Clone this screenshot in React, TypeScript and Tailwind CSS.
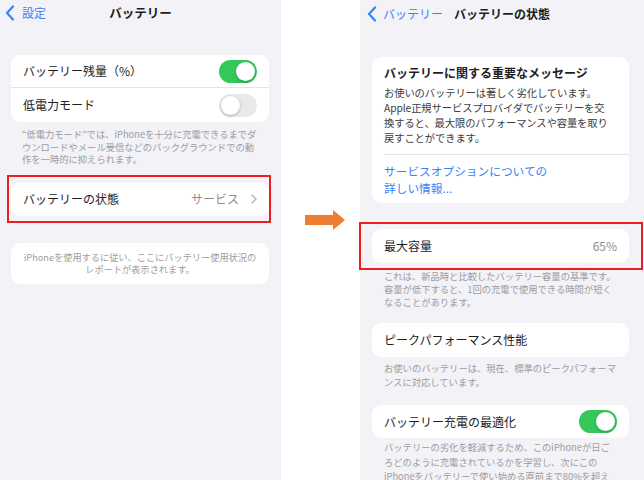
import React from "react";

const font = "font-['Noto_Sans_CJK_JP','Noto_Sans',sans-serif]";

function Toggle({ on }: { on: boolean }) {
  return (
    <div
      className={
        on
          ? "relative w-[38px] h-[23px] rounded-full bg-[#34c759]"
          : "relative w-[38px] h-[23px] rounded-full bg-[#e9e9eb]"
      }
    >
      <div
        className={
          on
            ? "absolute top-[2px] right-[2px] w-[19px] h-[19px] rounded-full bg-white shadow-[0_1px_3px_rgba(0,0,0,0.25)]"
            : "absolute top-[2px] left-[2px] w-[19px] h-[19px] rounded-full bg-white shadow-[0_1px_3px_rgba(0,0,0,0.25)]"
        }
      />
    </div>
  );
}

function BackChevron() {
  return (
    <svg width="10" height="16" viewBox="0 0 10 16" fill="none">
      <path d="M8 1.5L2 8l6 6.5" stroke="#3a82f7" strokeWidth="2.2" strokeLinecap="round" strokeLinejoin="round" />
    </svg>
  );
}

function Footnote({ lines, className = "" }: { lines: string[]; className?: string }) {
  return (
    <div className={"text-[9.3px] text-[#9c9ca1] " + className}>
      {lines.map((l) => (
        <div key={l} className="whitespace-nowrap">
          {l}
        </div>
      ))}
    </div>
  );
}

function LeftPhone() {
  return (
    <div className="w-[281px] shrink-0 bg-[#f2f2f7] text-[#1d1d1f]">
      {/* nav */}
      <div className="relative h-[25px] flex items-center">
        <div className="flex items-center gap-[7px] pl-[5px]">
          <BackChevron />
          <span className="text-[12px] text-[#3a82f7]">設定</span>
        </div>
        <div className="absolute left-0 right-0 text-center text-[12.5px] font-bold leading-[25px]">バッテリー</div>
      </div>

      <div className="mt-[30px] ml-[11px] w-[258px] bg-white rounded-[9px]">
        <div className="h-[33px] flex items-center justify-between pl-[12px] pr-[12px] border-b border-[#e3e3e6]">
          <span className="text-[12px]">バッテリー残量（%）</span>
          <Toggle on />
        </div>
        <div className="h-[34px] flex items-center justify-between pl-[12px] pr-[12px]">
          <span className="text-[12px]">低電力モード</span>
          <Toggle on={false} />
        </div>
      </div>

      <Footnote
        className="mt-[6px] pl-[22px] leading-[12.5px]"
        lines={[
          "“低電力モード”では、iPhoneを十分に充電できるまでダ",
          "ウンロードやメール受信などのバックグラウンドでの動",
          "作を一時的に抑えられます。",
        ]}
      />

      <div className="mt-[9px] ml-[7px] w-[264px] border-2 border-[#ee1c1c] pt-[6px] pb-[5px]">
        <div className="ml-[2px] w-[258px] h-[33px] bg-white rounded-[9px] flex items-center justify-between pl-[12px] pr-[12px]">
          <span className="text-[12px]">バッテリーの状態</span>
          <div className="flex items-center gap-[12px] text-[12px] text-[#8e8e93]">
            <span>サービス</span>
            <svg width="6" height="10" viewBox="0 0 6 10" fill="none">
              <path d="M1 1l4 4-4 4" stroke="#b4b4b9" strokeWidth="1.4" strokeLinecap="round" strokeLinejoin="round" />
            </svg>
          </div>
        </div>
      </div>

      <div className="mt-[20px] ml-[11px] w-[258px] h-[41px] bg-white rounded-[9px] flex flex-col items-center justify-center text-[9.2px] leading-[12.5px] text-[#9c9ca1]">
        <div className="whitespace-nowrap">iPhoneを使用するに従い、ここにバッテリー使用状況の</div>
        <div className="whitespace-nowrap">レポートが表示されます。</div>
      </div>
    </div>
  );
}

function RightPhone() {
  return (
    <div className="w-[284px] shrink-0 bg-[#f2f2f7] text-[#1d1d1f]">
      {/* nav */}
      <div className="h-[28px] flex items-center pl-[7px]">
        <BackChevron />
        <span className="ml-[6px] text-[12px] text-[#3a82f7]">バッテリー</span>
        <span className="ml-[11px] text-[12px] font-bold">バッテリーの状態</span>
      </div>

      <div className="mt-[29px] ml-[12px] w-[257px] bg-white rounded-[9px]">
        <div className="pl-[12px] pt-[7px] pb-[9px]">
          <div className="text-[12px] font-bold leading-[18px]">バッテリーに関する重要なメッセージ</div>
          <div className="mt-[3px] text-[10.3px] leading-[15px] text-[#3c3c43] tracking-[-0.1px]">
            <div className="whitespace-nowrap">お使いのバッテリーは著しく劣化しています。</div>
            <div className="whitespace-nowrap">Apple正規サービスプロバイダでバッテリーを交</div>
            <div className="whitespace-nowrap">換すると、最大限のパフォーマンスや容量を取り</div>
            <div className="whitespace-nowrap">戻すことができます。</div>
          </div>
        </div>
        <div className="ml-[12px] border-t border-[#e3e3e6]" />
        <div className="pl-[12px] pt-[7px] pb-[7px] text-[11.7px] leading-[17px] text-[#3a82f7]">
          <div>サービスオプションについての</div>
          <div>詳しい情報...</div>
        </div>
      </div>

      <div className="mt-[19px] -ml-[1px] w-[284px] border-2 border-[#ee1c1c] pt-[5px] pb-[5px]">
        <div className="ml-[11px] w-[257px] h-[34px] bg-white rounded-[9px] flex items-center justify-between pl-[12px] pr-[12px]">
          <span className="text-[12px]">最大容量</span>
          <span className="text-[12px] text-[#8e8e93]">65%</span>
        </div>
      </div>

      <Footnote
        className="mt-0 pl-[24px] leading-[13px]"
        lines={[
          "これは、新品時と比較したバッテリー容量の基準です。",
          "容量が低下すると、1回の充電で使用できる時間が短く",
          "なることがあります。",
        ]}
      />

      <div className="mt-[14px] ml-[12px] w-[257px] h-[34px] bg-white rounded-[9px] flex items-center pl-[12px]">
        <span className="text-[12px]">ピークパフォーマンス性能</span>
      </div>

      <Footnote
        className="mt-[4px] pl-[24px] leading-[14px]"
        lines={["お使いのバッテリーは、現在、標準のピークパフォーマ", "ンスに対応しています。"]}
      />

      <div className="mt-[16px] ml-[12px] w-[257px] h-[33px] bg-white rounded-[9px] flex items-center justify-between pl-[12px] pr-[12px]">
        <span className="text-[12px]">バッテリー充電の最適化</span>
        <Toggle on />
      </div>

      <Footnote
        className="mt-[2px] pl-[24px] leading-[14.5px]"
        lines={[
          "バッテリーの劣化を軽減するため、このiPhoneが日ご",
          "ろどのように充電されているかを学習し、次にこの",
          "iPhoneをバッテリーで使い始める直前まで80%を超え",
        ]}
      />
    </div>
  );
}

export default function App() {
  return (
    <div className={"w-[644px] h-[480px] overflow-hidden bg-white flex " + font}>
      <LeftPhone />
      <div className="w-[79px] shrink-0 pt-[210px] pl-[24px]">
        <svg width="40" height="20" viewBox="0 0 40 20">
          <polygon points="0,5 28,5 28,0 40,10 28,20 28,15 0,15" fill="#ed7d31" />
        </svg>
      </div>
      <RightPhone />
    </div>
  );
}
